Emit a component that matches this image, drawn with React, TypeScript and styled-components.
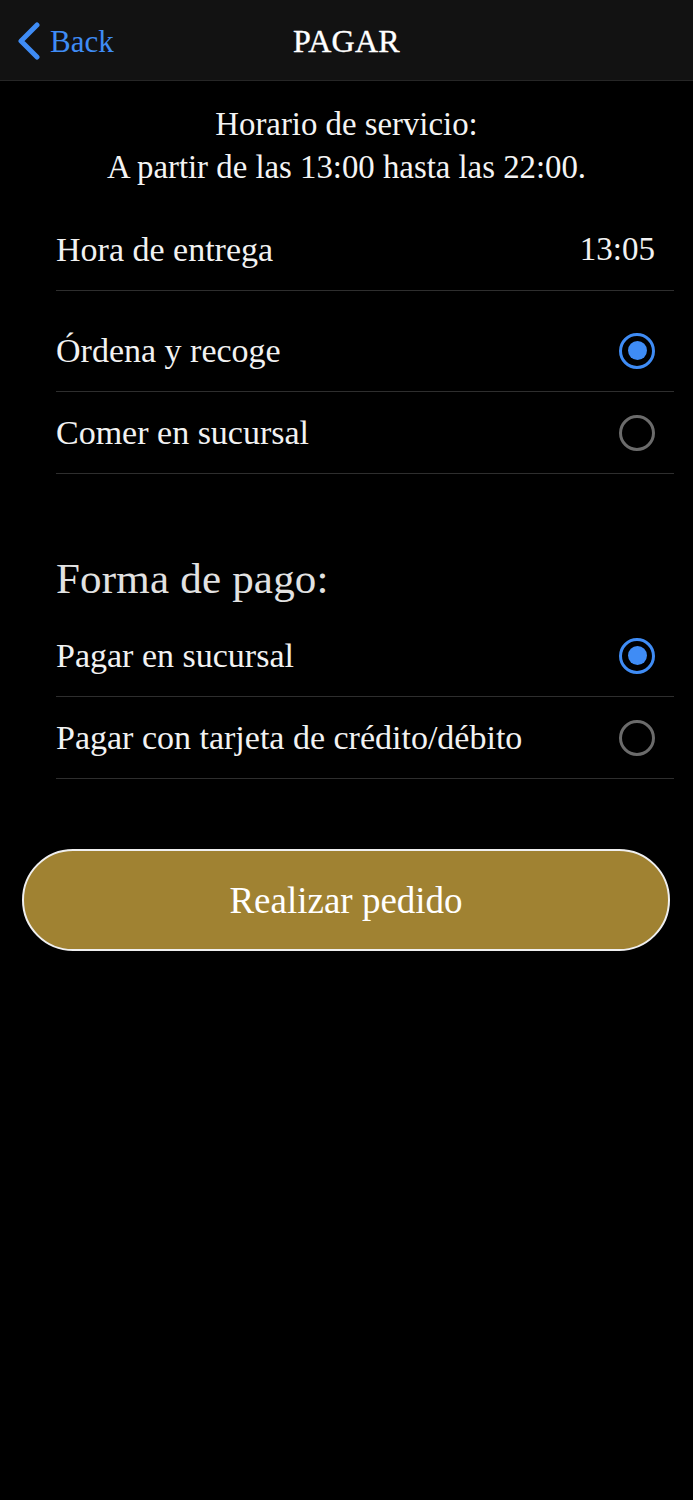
import React, { useState } from 'react';
import styled, { createGlobalStyle } from 'styled-components';

const GlobalStyle = createGlobalStyle`
  html, body {
    margin: 0;
    padding: 0;
    background: #000;
  }
  body {
    font-family: "Liberation Serif", "Times New Roman", serif;
    color: #f2f2f2;
  }
`;

// -----------------------------------------------------------------------------
// Navigation bar
// -----------------------------------------------------------------------------
const NavBar = styled.header`
  height: 81px;
  box-sizing: border-box;
  padding-top: 3px;
  background: #121212;
  border-bottom: 1px solid #262626;
  display: grid;
  grid-template-columns: 1fr auto 1fr;
  align-items: center;
`;

const BackButton = styled.button`
  display: flex;
  align-items: center;
  gap: 8px;
  padding: 0 0 0 16px;
  background: none;
  border: none;
  color: #3f8cf5;
  font-family: inherit;
  font-size: 31px;
  cursor: pointer;
  justify-self: start;

  svg {
    width: 26px;
    height: 38px;
    margin-top: -2px;
  }
`;

const NavTitle = styled.h1`
  margin: 0;
  font-size: 32px;
  font-weight: 400;
  letter-spacing: 0.3px;
  color: #fff;
  -webkit-text-stroke: 0.4px #fff;
`;

// -----------------------------------------------------------------------------
// Content
// -----------------------------------------------------------------------------
const Content = styled.main`
  padding-top: 22px;
`;

const ServiceHours = styled.p`
  margin: 0 0 20px;
  text-align: center;
  font-size: 32.8px;
  line-height: 43px;
  color: #f4f4f4;
`;

const Section = styled.section<{ $top?: number }>`
  margin: ${({ $top }) => $top ?? 0}px 19px 0 56px;
`;

const Row = styled.label<{ $height?: number }>`
  height: ${({ $height }) => $height ?? 81}px;
  display: flex;
  align-items: center;
  justify-content: space-between;
  padding-right: 19px;
  border-bottom: 1px solid #2e2e2e;
  font-size: 34px;
  color: #f2f2f2;
  cursor: pointer;
`;

const Value = styled.span`
  font-size: 33px;
`;

const SectionTitle = styled.h2`
  margin: 0 0 12px;
  height: 50px;
  display: flex;
  align-items: center;
  font-size: 43px;
  font-weight: 400;
  letter-spacing: 0.2px;
  color: #e2e2e2;
`;

const Radio = styled.span<{ $checked: boolean }>`
  flex: none;
  width: 36px;
  height: 36px;
  box-sizing: border-box;
  border-radius: 50%;
  border: 3px solid ${({ $checked }) => ($checked ? '#3f8cf5' : '#6b6b6b')};
  display: flex;
  align-items: center;
  justify-content: center;

  &::after {
    content: '';
    width: 19px;
    height: 19px;
    border-radius: 50%;
    background: #3f8cf5;
    display: ${({ $checked }) => ($checked ? 'block' : 'none')};
  }
`;

const SubmitButton = styled.button`
  display: block;
  box-sizing: border-box;
  margin: 70px 23px 0 22px;
  width: calc(100% - 45px);
  height: 102px;
  border-radius: 51px;
  border: 2px solid #efefef;
  background: #a08232;
  color: #fff;
  font-family: inherit;
  font-size: 37px;
  cursor: pointer;
`;

const ChevronLeft = () => (
  <svg viewBox="0 0 26 38" fill="none">
    <path
      d="M21 3 L5 19 L21 35"
      stroke="currentColor"
      strokeWidth="5"
      strokeLinecap="round"
      strokeLinejoin="round"
    />
  </svg>
);

const deliveryOptions = ['Órdena y recoge', 'Comer en sucursal'];
const paymentOptions = ['Pagar en sucursal', 'Pagar con tarjeta de crédito/débito'];

const App = (): JSX.Element => {
  const [delivery, setDelivery] = useState(0);
  const [payment, setPayment] = useState(0);

  return (
    <>
      <GlobalStyle />
      <NavBar>
        <BackButton>
          <ChevronLeft />
          Back
        </BackButton>
        <NavTitle>PAGAR</NavTitle>
        <span />
      </NavBar>

      <Content>
        <ServiceHours>
          Horario de servicio:
          <br />
          A partir de las 13:00 hasta las 22:00.
        </ServiceHours>

        <Section>
          <Row $height={81}>
            Hora de entrega
            <Value>13:05</Value>
          </Row>
        </Section>

        <Section $top={19}>
          {deliveryOptions.map((label, i) => (
            <Row key={label} onClick={() => setDelivery(i)}>
              {label}
              <Radio $checked={delivery === i} />
            </Row>
          ))}
        </Section>

        <Section $top={79}>
          <SectionTitle>Forma de pago:</SectionTitle>
          {paymentOptions.map((label, i) => (
            <Row key={label} onClick={() => setPayment(i)}>
              {label}
              <Radio $checked={payment === i} />
            </Row>
          ))}
        </Section>

        <SubmitButton>Realizar pedido</SubmitButton>
      </Content>
    </>
  );
};

export default App;
